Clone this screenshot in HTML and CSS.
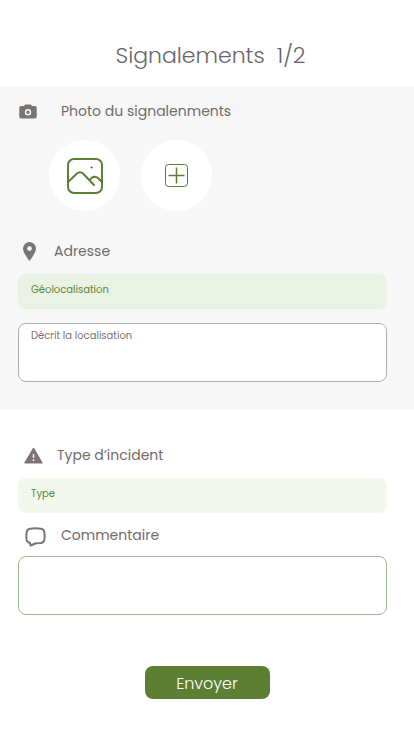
FILE: index.html
```html
<!DOCTYPE html>
<html lang="fr">
<head>
<meta charset="utf-8">
<meta name="viewport" content="width=device-width, initial-scale=1">
<title>Signalements</title>
<link rel="stylesheet" href="styles.css">
</head>
<body>
<header class="top"><h1>Signalements&nbsp; 1/2</h1></header>
<form class="report">
  <section class="panel panel-muted">
    <h2 class="heading heading-photo">
      <svg width="18" height="15" viewBox="0 0 18 15" aria-hidden="true"><path fill="#7a7473" fill-rule="evenodd" d="M5 2 6 .5h6L13 2h3a1.700 1.700 0 0 1 1.700 1.700v9a1.700 1.700 0 0 1-1.700 1.700H2A1.700 1.700 0 0 1 .3 12.700v-9A1.700 1.700 0 0 1 2 2zM9 5a3.200 3.200 0 1 0 0 6.400A3.200 3.200 0 0 0 9 5zm0 1.500a1.700 1.700 0 1 1 0 3.400 1.700 1.700 0 0 1 0-3.400z"/></svg>
      <span>Photo du signalenments</span>
    </h2>
    <div class="photos">
      <button type="button" class="round" aria-label="Photo">
        <svg width="37" height="37" viewBox="0 0 37 37" fill="none" stroke="#5a7f32" stroke-width="2" stroke-linecap="round" stroke-linejoin="round" aria-hidden="true"><rect x="2" y="2" width="34" height="34" rx="6"/><path d="M2 25 11 16.500Q14 14 17 16.500L28 28M23.500 23.500 25.500 21Q29 18.500 32 21L36 25"/><circle cx="25.500" cy="10.500" r=".7" fill="#5a7f32" stroke-width=".8"/></svg>
      </button>
      <button type="button" class="round" aria-label="Ajouter une photo">
        <svg width="23" height="23" viewBox="0 0 23 23" fill="none" stroke="#5a7f32" aria-hidden="true"><rect x=".5" y=".5" width="22" height="22" rx="3"/><path stroke-width="1.500" d="M11.500 3.500v16M3.500 11.500h16"/></svg>
      </button>
    </div>
    <h2 class="heading heading-address">
      <svg width="13" height="19" viewBox="0 0 13 19" aria-hidden="true"><path fill="#7a7473" fill-rule="evenodd" d="M6.500 0A6.500 6.500 0 0 0 0 6.500C0 11 6.500 19 6.500 19S13 11 13 6.500A6.500 6.500 0 0 0 6.500 0zm0 4.200a2.400 2.400 0 1 1 0 4.800 2.400 2.400 0 0 1 0-4.800z"/></svg>
      <span>Adresse</span>
    </h2>
    <input class="field field-geo" type="text" placeholder="Géolocalisation" aria-label="Géolocalisation">
    <textarea class="area area-place" placeholder="Décrit la localisation" aria-label="Décrit la localisation"></textarea>
  </section>
  <section class="panel">
    <h2 class="heading heading-type">
      <svg width="19" height="17" viewBox="0 0 19 17" aria-hidden="true"><path fill="#7a7473" stroke="#7a7473" stroke-linejoin="round" d="M9.500 1 18.300 16H.7z"/><path stroke="#fff" stroke-width="1.500" d="M9.500 7v3.800M9.500 12.300v1.700"/></svg>
      <label for="type">Type d’incident</label>
    </h2>
    <input class="field field-type" id="type" type="text" placeholder="Type">
    <h2 class="heading heading-comment">
      <svg width="21" height="20" viewBox="0 0 21 20" fill="none" stroke="#7a7473" stroke-width="2" stroke-linejoin="round" aria-hidden="true"><path d="M5 1.700Q10.500 1 16 1.700 18.800 2 19.300 5 20 9 19.300 13 18.800 15.500 16 15.900L11 16.300 5.500 18.500 5 15.800Q2.200 15.500 1.700 13 1 9 1.700 5 2.200 2 5 1.700z"/></svg>
      <label for="comment">Commentaire</label>
    </h2>
    <textarea class="area area-comment" id="comment"></textarea>
    <div class="actions"><button class="send" type="submit">Envoyer</button></div>
  </section>
</form>
</body>
</html>
```
FILE: styles.css
```css
* {
  box-sizing: border-box;
}

body {
  margin: 0;
  background: #fff;
  color: #7a7473;
  font-family: Poppins, Inter, sans-serif;
}

button,
input,
textarea {
  display: block;
  font-family: inherit;
}

.top {
  padding: 40px 0 14px 7px;
  text-align: center;
}

h1 {
  margin: 0;
  color: #666;
  font-size: 22px;
  font-weight: 300;
  line-height: 32px;
}

.panel {
  padding: 32px 27px 36px 18px;
}

.panel-muted {
  padding-top: 12px;
  padding-bottom: 28px;
  background: #f7f7f7;
}

.heading {
  display: flex;
  align-items: center;
  height: 26px;
  margin: 0;
  color: #716b6a;
  font-size: 14px;
  font-weight: 400;
  line-height: 26px;
}

.heading-photo {
  gap: 24px;
  padding-left: 1px;
}

.heading-address {
  gap: 18px;
  padding-left: 5px;
}

.heading-type {
  gap: 14px;
  padding-left: 6px;
}

.heading-comment {
  gap: 15px;
  margin-top: 9px;
  padding-left: 7px;
}

.heading-comment svg {
  margin-top: 4px;
}

.photos {
  display: flex;
  gap: 21px;
  margin: 16px 0 27px 31px;
}

.round {
  display: flex;
  align-items: center;
  justify-content: center;
  width: 71px;
  height: 71px;
  padding: 0;
  border: 0;
  border-radius: 50%;
  background: #fff;
}

.field,
.area {
  width: 100%;
  border-radius: 8px;
  font-size: 10px;
  font-weight: 400;
  line-height: 16px;
}

.field {
  height: 35px;
  margin-top: 10px;
  padding: 0 13px 4px;
  border: 0;
  color: #5a7f32;
}

.field-geo {
  background: #eaf1e5;
}

.field-type {
  background: #f2f8ed;
}

.field::placeholder {
  color: #5f8636;
  opacity: 1;
}

.area {
  height: 59px;
  padding: 4px 12px;
  border: 1px solid #b0b0b0;
  background: #fff;
  color: #7a7473;
  resize: none;
}

.area::placeholder {
  color: #7a7473;
  opacity: 1;
}

.area-place {
  margin-top: 14px;
}

.area-comment {
  margin-top: 8px;
  border-color: #a1b98b;
}

.actions {
  display: flex;
  justify-content: center;
  margin-top: 51px;
  padding-left: 9px;
}

.send {
  width: 125px;
  height: 33px;
  padding: 2px 0 0;
  border: 0;
  border-radius: 8px;
  background: #5c7f34;
  color: #fff;
  font-size: 16px;
  font-weight: 300;
  line-height: 31px;
}
```
